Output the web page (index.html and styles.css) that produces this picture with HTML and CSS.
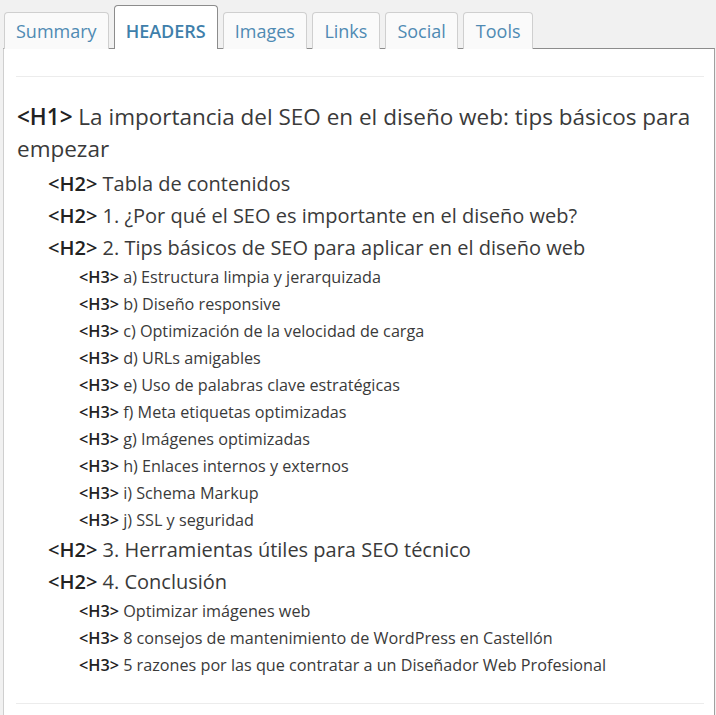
FILE: index.html
```html
<!DOCTYPE html>
<html lang="es">
<head>
<meta charset="utf-8">
<link rel="stylesheet" href="styles.css">
</head>
<body>
<div class="tabs">
  <div class="tab">Summary</div>
  <div class="tab active">HEADERS</div>
  <div class="tab">Images</div>
  <div class="tab wide">Links</div>
  <div class="tab wide">Social</div>
  <div class="tab wide">Tools</div>
</div>
<div class="panel">
  <div class="rule"></div>
  <div class="list">
    <div class="h h1"><b>&lt;H1&gt;</b> La importancia del SEO en el diseño web: tips básicos para empezar</div>
    <div class="h h2"><b>&lt;H2&gt;</b> Tabla de contenidos</div>
    <div class="h h2"><b>&lt;H2&gt;</b> 1. ¿Por qué el SEO es importante en el diseño web?</div>
    <div class="h h2"><b>&lt;H2&gt;</b> 2. Tips básicos de SEO para aplicar en el diseño web</div>
    <div class="h h3"><b>&lt;H3&gt;</b> a) Estructura limpia y jerarquizada</div>
    <div class="h h3"><b>&lt;H3&gt;</b> b) Diseño responsive</div>
    <div class="h h3"><b>&lt;H3&gt;</b> c) Optimización de la velocidad de carga</div>
    <div class="h h3"><b>&lt;H3&gt;</b> d) URLs amigables</div>
    <div class="h h3"><b>&lt;H3&gt;</b> e) Uso de palabras clave estratégicas</div>
    <div class="h h3"><b>&lt;H3&gt;</b> f) Meta etiquetas optimizadas</div>
    <div class="h h3"><b>&lt;H3&gt;</b> g) Imágenes optimizadas</div>
    <div class="h h3"><b>&lt;H3&gt;</b> h) Enlaces internos y externos</div>
    <div class="h h3"><b>&lt;H3&gt;</b> i) Schema Markup</div>
    <div class="h h3"><b>&lt;H3&gt;</b> j) SSL y seguridad</div>
    <div class="h h2"><b>&lt;H2&gt;</b> 3. Herramientas útiles para SEO técnico</div>
    <div class="h h2"><b>&lt;H2&gt;</b> 4. Conclusión</div>
    <div class="h h3"><b>&lt;H3&gt;</b> Optimizar imágenes web</div>
    <div class="h h3"><b>&lt;H3&gt;</b> 8 consejos de mantenimiento de WordPress en Castellón</div>
    <div class="h h3"><b>&lt;H3&gt;</b> 5 razones por las que contratar a un Diseñador Web Profesional</div>
  </div>
  <div class="rule end"></div>
</div>
</body>
</html>
```
FILE: styles.css
```css
html, body {
  margin: 0;
  padding: 0;
  background: #f1f1f1;
  font-family: "Open Sans", "Noto Sans", sans-serif;
  overflow: hidden;
}
.tabs {
  display: flex;
  align-items: flex-end;
  gap: 5px;
  padding: 5px 0 0 4px;
  position: relative;
  z-index: 1;
}
.tab {
  box-sizing: border-box;
  height: 37px;
  padding: 0 11px;
  border: 1px solid #cfcfcf;
  border-bottom: none;
  border-radius: 4px 4px 0 0;
  background: #fafafa;
  color: #4f8ab3;
  font-size: 18px;
  line-height: 36px;
  margin-bottom: -1px;
}
.tab.wide {
  padding: 0 11.5px;
}
.tab.active {
  height: 44px;
  line-height: 50px;
  padding: 0 11px;
  border-color: #8c8c8c;
  background: #fff;
  color: #3f7fab;
  font-weight: 600;
}
.panel {
  margin: 0 1px 0 3px;
  background: #fff;
  border: 1px solid #a9a9a9;
  border-top-color: #8c8c8c;
  border-right-color: #a0a0a0;
  border-left-color: #cfcfcf;
  height: 720px;
  padding: 0 10px 0 12px;
}
.rule {
  height: 1px;
  background: #ececec;
  margin-top: 27px;
}
.rule.end {
  margin-top: 0;
}
.list {
  padding: 24px 0 24px 1px;
}
.h {
  color: #3a3a3a;
}
.h b {
  color: #222;
  font-weight: 600;
}
.h1 {
  font-size: 22.5px;
  line-height: 32px;
  margin-bottom: 3px;
}
.h2 {
  font-size: 20px;
  line-height: 32px;
  padding-left: 31px;
}
.h3 {
  font-size: 16.2px;
  line-height: 27px;
  padding-left: 62px;
}
```
